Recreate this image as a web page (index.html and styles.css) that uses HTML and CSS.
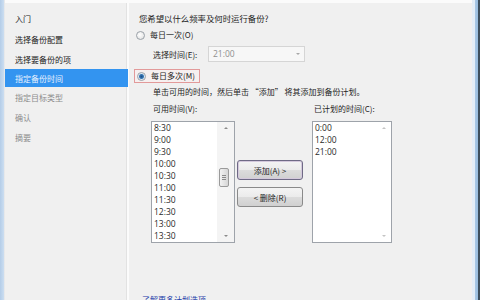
FILE: index.html
```html
<!DOCTYPE html>
<html lang="zh-CN">
<head>
    <meta charset="UTF-8">
    <title>备份计划</title>
    <link rel="stylesheet" href="styles.css">
</head>
<body>
    <div class="window">
        <div class="frame-left"></div>

        <nav class="steps">
            <div class="step s1">入门</div>
            <div class="step s2">选择备份配置</div>
            <div class="step s3">选择要备份的项</div>
            <div class="step current">指定备份时间</div>
            <div class="step todo">指定目标类型</div>
            <div class="step todo">确认</div>
            <div class="step todo">摘要</div>
        </nav>

        <main class="page">
            <p class="question">您希望以什么频率及何时运行备份?</p>

            <div class="option"><span class="radio"></span>每日一次(O)</div>

            <div class="time-row">
                <span class="time-label">选择时间(E):</span>
                <div class="select">21:00<span class="select-arrow"></span></div>
            </div>

            <div class="option focused"><span class="radio checked"></span>每日多次(M)</div>

            <p class="hint">单击可用的时间，然后单击 “添加” 将其添加到备份计划。</p>

            <div class="lists">
                <div class="list-col">
                    <div class="list-label">可用时间(V):</div>
                    <div class="listbox available">
                        <ul class="items">
                            <li>8:30</li>
                            <li>9:00</li>
                            <li>9:30</li>
                            <li>10:00</li>
                            <li>10:30</li>
                            <li>11:00</li>
                            <li>11:30</li>
                            <li>12:30</li>
                            <li>13:00</li>
                            <li>13:30</li>
                        </ul>
                        <div class="scrollbar">
                            <span class="arrow up"></span>
                            <span class="thumb"><i></i><i></i><i></i></span>
                            <span class="arrow down"></span>
                        </div>
                    </div>
                </div>

                <div class="actions">
                    <button class="btn default" type="button">添加(A) &gt;</button>
                    <button class="btn" type="button">&lt; 删除(R)</button>
                </div>

                <div class="list-col">
                    <div class="list-label">已计划的时间(C):</div>
                    <div class="listbox scheduled">
                        <ul class="items">
                            <li>0:00</li>
                            <li>12:00</li>
                            <li>21:00</li>
                        </ul>
                        <div class="scrollbar disabled">
                            <span class="arrow up"></span>
                            <span class="arrow down"></span>
                        </div>
                    </div>
                </div>
            </div>

            <a class="more" href="#">了解更多计划选项</a>
        </main>

        <div class="frame-right"></div>
    </div>
</body>
</html>
```

FILE: styles.css
```css
* {
    box-sizing: border-box;
}
body {
    margin: 0;
    background-color: #f0f0f0;
    font-family: "Noto Sans CJK SC", "Noto Sans", sans-serif;
    font-size: 8px;
    color: #1e1e1e;
}
.window {
    display: flex;
    width: 480px;
    height: 300px;
    overflow: hidden;
    background-color: #f0f0f0;
}

/* window frame edges */
.frame-left {
    width: 5px;
    flex-shrink: 0;
    background: linear-gradient(to right, #b4cde8, #c9dcf0 70%, #f6efe8);
}
.frame-right {
    width: 8px;
    flex-shrink: 0;
    background: linear-gradient(to right, #e4eef8 0, #e4eef8 3px, #a9c8e6 3px, #98bde0 6px, #3d4f5e 6px);
}

/* left step list */
.steps {
    width: 124px;
    flex-shrink: 0;
    border-top: 3px solid #fbfbfb;
    border-right: 2px solid #fbfbfb;
    box-shadow: inset -1px 0 0 #e2e2e2;
    padding-top: 5px;
}
.step {
    display: flex;
    align-items: center;
    padding-left: 10px;
    height: 20px;
    color: #222;
}
.step.s1, .step.s2 {
    height: 21px;
}
.step.s3 {
    height: 19px;
}
.step.current {
    height: 18px;
    background-color: #3394f0;
    color: #e8f2ff;
    margin-right: -1px;
}
.step.todo {
    color: #8c8c8c;
}

/* right page */
.page {
    flex: 1;
    border-top: 3px solid #fbfbfb;
    padding: 9px 0 0 7px;
}
.question {
    margin: 0 0 0 3px;
    line-height: 12px;
    font-size: 8.4px;
}
.option {
    display: flex;
    align-items: center;
    gap: 5px;
    height: 14px;
    margin-top: 4px;
    line-height: 12px;
    white-space: nowrap;
}
.option.focused {
    width: 66px;
    margin: 7px 0 0 -2px;
    padding-left: 2px;
    border: 1px solid #e29a9a;
    background-color: #f6f0f0;
}
.radio {
    width: 9px;
    height: 9px;
    border-radius: 50%;
    border: 1px solid #9aa1a8;
    background: radial-gradient(circle at 40% 40%, #ffffff, #dcdcdc);
    flex-shrink: 0;
}
.radio.checked {
    background: radial-gradient(circle, #1c4f86 0, #3a78b5 2px, #dde7f1 3px, #f4f4f4 4px);
}

.time-row {
    display: flex;
    align-items: center;
    margin-top: 4px;
    padding-left: 17px;
    height: 16px;
}
.time-label {
    width: 55px;
}
.select {
    position: relative;
    width: 97px;
    height: 16px;
    border: 1px solid #d5d5d5;
    background-color: #f7f7f7;
    color: #8f8f8f;
    padding-left: 4px;
    font-family: "Open Sans", sans-serif;
    line-height: 14px;
    font-size: 8.5px;
}
.select-arrow {
    position: absolute;
    right: 4px;
    top: 6px;
    border-left: 2px solid transparent;
    border-right: 2px solid transparent;
    border-top: 2px solid #a8a8a8;
}

.hint {
    margin: 3px 0 0 17px;
    line-height: 12px;
    white-space: nowrap;
}

/* lists */
.lists {
    display: flex;
    margin: 5px 0 0 15px;
}
.list-label {
    margin-left: 2px;
    line-height: 12px;
    height: 18px;
}
.listbox {
    display: grid;
    grid-template-columns: 1fr 17px;
    height: 122px;
    border: 1px solid #9ea3aa;
    background-color: #fff;
}
.available {
    width: 84px;
}
.scheduled {
    width: 80px;
    grid-template-columns: 1fr 15px;
}
.items {
    list-style: none;
    margin: 0;
    padding: 0 0 0 2px;
    font-family: "Open Sans", sans-serif;
    font-size: 8.5px;
    line-height: 12px;
    color: #2a2a2a;
}
.scrollbar {
    position: relative;
    background-color: #f4f4f4;
}
.scrollbar.disabled {
    background-color: #fff;
}
.arrow {
    position: absolute;
    left: 50%;
    margin-left: -2px;
    border-left: 2px solid transparent;
    border-right: 2px solid transparent;
}
.arrow.up {
    top: 5px;
    border-bottom: 2px solid #8a8a8a;
}
.arrow.down {
    bottom: 5px;
    border-top: 2px solid #8a8a8a;
}
.disabled .arrow.up {
    border-bottom-color: #c4c4c4;
}
.disabled .arrow.down {
    border-top-color: #c4c4c4;
}
.thumb {
    position: absolute;
    left: 2px;
    right: 5px;
    top: 46px;
    height: 19px;
    border: 1px solid #9a9a9a;
    border-radius: 2px;
    background: linear-gradient(to right, #f2f2f2, #d6d6d6);
    display: flex;
    flex-direction: column;
    justify-content: center;
    align-items: center;
    gap: 1px;
}
.thumb i {
    display: block;
    width: 4px;
    height: 1px;
    background-color: #8a8a8a;
}

.actions {
    display: flex;
    flex-direction: column;
    gap: 7px;
    padding-top: 57px;
    margin: 0 9px 0 2px;
}
.btn {
    width: 66px;
    height: 20px;
    border: 1px solid #8a8a8a;
    border-radius: 3px;
    background: linear-gradient(to bottom, #f4f4f4 0, #ebebeb 50%, #dcdcdc 50%, #d0d0d0);
    font-family: "Noto Sans CJK SC", "Noto Sans", sans-serif;
    font-size: 8px;
    color: #222;
    padding: 0;
}
.btn.default {
    border-color: #6f6a86;
    box-shadow: inset 0 0 0 1px #d4c9dc;
}

.more {
    display: block;
    margin: 51px 0 0 6px;
    color: #1a3aa8;
    text-decoration: none;
    line-height: 12px;
}
```
